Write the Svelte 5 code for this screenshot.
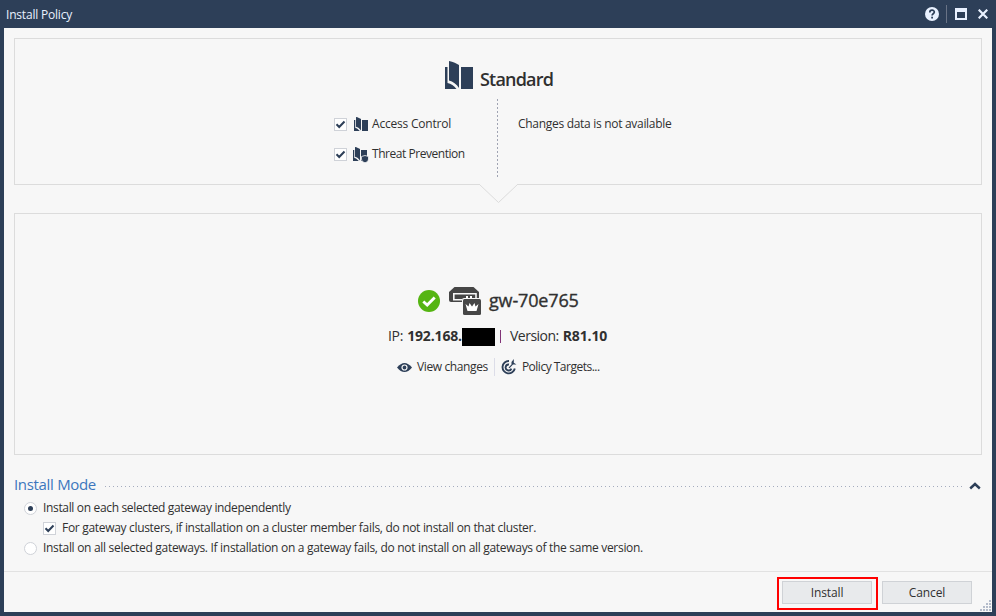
<script>
  let accessControl = $state(true);
  let threatPrevention = $state(true);
  let clusters = $state(true);
  let mode = $state('each');
</script>

{#snippet policyIcon(w, h)}
  <svg width={w} height={h} viewBox="0 0 28 28" fill="#2d3f58">
    <path d="M0 6H2.500V22C6 22.500 9 25 11.500 28H0Z" />
    <path d="M4 0C8 .6 12 3 14 4V27C11.500 23 8 20.500 4 19.500Z" />
    <path d="M16 6H28V28H16Z" />
  </svg>
{/snippet}

{#snippet check(on)}
  <span class="box">
    {#if on}
      <svg width="11" height="11" viewBox="0 0 11 11"><path d="M1.500 5.300L4.200 8L9.500 2.500" fill="none" stroke="#2d3f58" stroke-width="2" /></svg>
    {/if}
  </span>
{/snippet}

<div class="window">
  <header>
    <span class="title">Install Policy</span>
    <svg class="help" width="14" height="14" viewBox="0 0 14 14">
      <circle cx="7" cy="7" r="7" fill="#e9f1ff" />
      <path d="M4.800 5.400C4.800 2.500 9.300 2.500 9.300 5.100C9.300 6.700 7.100 6.800 7.100 8.500" fill="none" stroke="#2d3f58" stroke-width="1.700" />
      <rect x="6.200" y="9.700" width="1.800" height="1.800" fill="#2d3f58" />
    </svg>
    <i class="divider"></i>
    <i class="maximize"></i>
    <svg class="close" width="10" height="10" viewBox="0 0 10 10"><path d="M.7.7L9.300 9.300M9.300.7L.7 9.300" stroke="#e9f1ff" stroke-width="2.200" /></svg>
  </header>

  <main>
    <section class="policy">
      <div class="heading">
        {@render policyIcon(28, 28)}
        <h1>Standard</h1>
      </div>
      <div class="columns">
        <div class="left">
          <button class="opt" onclick={() => (accessControl = !accessControl)}>
            {@render check(accessControl)}
            <span class="ic">{@render policyIcon(14, 14)}</span>
            <span class="t-access">Access Control</span>
          </button>
          <button class="opt" onclick={() => (threatPrevention = !threatPrevention)}>
            {@render check(threatPrevention)}
            <span class="ic threat">
              {@render policyIcon(14, 14)}
              <svg class="shield" width="8" height="8" viewBox="0 0 8 8"><path d="M.5 1.500L4 .5L7.500 1.500V4C7.500 6 5.800 7.200 4 7.800C2.200 7.200.5 6 .5 4Z" fill="#2d3f58" stroke="#f7f7f7" stroke-width=".8" /></svg>
            </span>
            <span class="t-threat">Threat Prevention</span>
          </button>
        </div>
        <i class="vdots"></i>
        <div class="right"><span class="t-changes">Changes data is not available</span></div>
      </div>
      <svg class="notch" width="39" height="20" viewBox="0 0 39 20"><path d="M1 -1H38V1L19.500 18.500L1 1Z" fill="#f7f7f7" /><path d="M.5.5L19.500 18.500L38.500.5" fill="none" stroke="#dcdcdc" /></svg>
    </section>

    <section class="gateway">
      <div class="gw">
        <svg width="22" height="22" viewBox="0 0 22 22"><circle cx="11" cy="11" r="11" fill="#55b512" /><path d="M5.300 11.500L9.200 15L16.700 7.500" fill="none" stroke="#fff" stroke-width="2.900" /></svg>
        <svg class="device" width="32" height="28" viewBox="0 0 32 28">
          <path d="M5.500 0H24.500L30 5V15H2Q0 15 0 13V5Z" fill="#464646" />
          <path d="M13 12.800H4.800V6.800H27V11" fill="none" stroke="#f7f7f7" stroke-width="1.600" />
          <path d="M17 9H19V11H17ZM21 9H23V11H21Z" fill="#fff" />
          <path d="M7.500 9.200H14V10.600H7.500Z" fill="#464646" />
          <rect x="13" y="11" width="19" height="17" rx="2" fill="#f7f7f7" />
          <rect x="14" y="12" width="18" height="16" rx="1.500" fill="#464646" />
          <path d="M16.500 17L19.500 19.500L20.500 16L23 19.500L25.500 16L26.500 19.500L29.500 17L27.500 24H18.500Z" fill="#fff" />
        </svg>
        <h2>gw-70e765</h2>
      </div>
      <div class="info">
        <span class="t-ip">IP:</span><b class="t-addr">192.168.</b><i class="redact"></i><i class="bar"></i>
        <span class="t-ver">Version:</span><b class="t-r">R81.10</b>
      </div>
      <div class="links">
        <svg width="15" height="9" viewBox="0 0 15 9"><path d="M0 4.500Q7.500-4.500 15 4.500Q7.500 13.500 0 4.500Z" fill="#2d3f58" /><circle cx="7.500" cy="4.500" r="2.500" fill="none" stroke="#f7f7f7" stroke-width="1.200" /></svg>
        <span class="t-view">View changes</span>
        <i class="linkbar"></i>
        <svg class="target" width="16" height="16" viewBox="0 0 16 16"><path d="M8 2A6.200 6.200 0 1 0 13.800 9.500M8 5.500A3 3 0 1 0 10.400 9.600" fill="none" stroke="#2d3f58" stroke-width="1.900" /><path d="M7.500 8.500L10.500 5.500V3L12.800 0V3.700L15.500 5.500H12L8.500 9.300Z" fill="#2d3f58" /></svg>
        <span class="t-targets">Policy Targets...</span>
      </div>
    </section>

    <div class="mode-head">
      <h3>Install Mode</h3>
      <i class="hdots"></i>
      <svg width="12" height="8" viewBox="0 0 12 8"><path d="M1.200 6.500L6 2L10.800 6.500" fill="none" stroke="#2d3f58" stroke-width="2.400" /></svg>
    </div>
    <div class="modes">
      <button class="row" onclick={() => (mode = 'each')}>
        <span class="radio" class:on={mode === 'each'}></span><span class="t-each">Install on each selected gateway independently</span>
      </button>
      <button class="row sub" onclick={() => (clusters = !clusters)}>
        {@render check(clusters)}<span class="t-cluster">For gateway clusters, if installation on a cluster member fails, do not install on that cluster.</span>
      </button>
      <button class="row" onclick={() => (mode = 'all')}>
        <span class="radio" class:on={mode === 'all'}></span><span class="t-all">Install on all selected gateways. If installation on a gateway fails, do not install on all gateways of the same version.</span>
      </button>
    </div>
  </main>

  <footer>
    <div class="highlight"><button class="btn">Install</button></div>
    <button class="btn cancel">Cancel</button>
    <svg class="grip" width="11" height="11" viewBox="0 0 11 11" fill="#b4bccb"><path d="M9 0h2v2H9zM6 3h2v2H6zM9 3h2v2H9zM3 6h2v2H3zM6 6h2v2H6zM9 6h2v2H9zM0 9h2v2H0zM3 9h2v2H3zM6 9h2v2H6zM9 9h2v2H9z" /></svg>
  </footer>
</div>

<style>
  .window { box-sizing: border-box; width: 996px; height: 616px; border: 4px solid #2d3f58; border-top: 0; background: #f7f7f7; display: flex; flex-direction: column; font: 12px/20px "Open Sans", "Noto Sans", sans-serif; color: #303030; white-space: nowrap; overflow: hidden; }
  svg { display: block; flex: none; }
  span, b, i, h1, h2, h3 { flex: none; }
  h1, h2, h3 { margin: 0; }
  button { font: inherit; color: inherit; background: none; border: 0; padding: 0; margin: 0; text-align: left; letter-spacing: inherit; }
  header { height: 28px; flex: none; background: #2d3f58; color: #e9f1ff; display: flex; align-items: center; margin: 0 -4px; padding: 0 8px 0 6px; }
  .title { margin-right: auto; padding-top: 2px; letter-spacing: -0.2px; }
  .divider { width: 1px; height: 18px; background: #697386; margin: 0 8px 0 7px; }
  .maximize { box-sizing: border-box; width: 12px; height: 12px; border: 2px solid #e9f1ff; border-top-width: 4px; margin-right: 11px; }
  main { flex: 1; padding: 10px 10px 0; display: flex; flex-direction: column; }
  section { box-sizing: border-box; border: 1px solid #dcdcdc; flex: none; }
  .policy { height: 147px; margin-bottom: 28px; position: relative; }
  .heading { display: flex; padding: 22px 0 0 430px; height: 38px; }
  h1 { font-size: 18px; line-height: 28px; font-weight: 600; margin: 4px 0 0 7px; letter-spacing: -0.8px; }
  .columns { display: flex; }
  .left { width: 482px; box-sizing: border-box; padding: 15px 0 0 319px; display: flex; flex-direction: column; gap: 10px; }
  .opt, .row { display: flex; align-items: center; height: 20px; }
  .t-access { letter-spacing: -0.2px; }
  .t-threat { letter-spacing: -0.46px; }
  .t-changes { letter-spacing: -0.3px; }
  .box { box-sizing: border-box; width: 13px; height: 13px; border: 1px solid #cfd2d8; background: #fff; }
  .ic { width: 18px; margin-left: 7px; position: relative; }
  .threat { width: 19px; margin-left: 6px; }
  .shield { position: absolute; left: 8px; top: 8px; }
  .vdots { width: 1px; height: 79px; background: repeating-linear-gradient(#a0a4b3 0 2px, transparent 2px 4px); }
  .right { padding: 15px 0 0 20px; }
  .notch { position: absolute; left: 464px; top: 145px; }
  .gateway { height: 242px; padding-top: 72px; display: flex; flex-direction: column; }
  .gw { display: flex; align-items: center; height: 30px; padding-left: 403px; }
  .device { margin-left: 9px; }
  h2 { font-size: 18px; font-weight: 400; -webkit-text-stroke: 0.35px #303030; line-height: 28px; margin: -2px 0 0 8px; letter-spacing: -0.15px; }
  .info { display: flex; align-items: center; height: 20px; font-size: 14px; margin: 10px 0 0 373px; }
  .t-ip { letter-spacing: -0.3px; }
  .t-addr { margin-left: 4px; letter-spacing: -0.15px; }
  .t-ver { letter-spacing: -0.5px; }
  .redact { width: 33px; height: 18px; background: #000; margin-top: 1px; }
  .bar { width: 1px; height: 13px; background: #813477; margin: 1px 9px 0 5px; }
  .t-r { margin-left: 4px; letter-spacing: -0.15px; }
  .links { display: flex; align-items: center; height: 20px; margin: 11px 0 0 382px; }
  .t-view { margin-left: 5px; letter-spacing: -0.38px; }
  .linkbar { width: 1px; height: 18px; background: #dcdde8; margin: 0 6px; }
  .t-targets { margin-left: 5px; letter-spacing: -0.5px; }
  .mode-head { display: flex; align-items: center; height: 22px; margin-top: 18px; padding-right: 1px; flex: none; }
  h3 { font-size: 15px; font-weight: 400; color: #3c76bd; line-height: 20px; letter-spacing: -0.32px; }
  .hdots { flex: 1; height: 1px; margin: 4px 6px 0 9px; background: repeating-linear-gradient(90deg, #a5acbe 0 1px, transparent 1px 4px); }
  .mode-head svg { margin-top: 3px; }
  .modes { padding: 3px 0 0 10px; }
  .sub { padding-left: 19px; }
  .radio { box-sizing: border-box; width: 13px; height: 13px; border: 1px solid #cfd2d8; border-radius: 50%; background: #fff; display: flex; align-items: center; justify-content: center; }
  .radio.on::before { content: ""; width: 5px; height: 5px; border-radius: 50%; background: #2d3f58; }
  .row span + span { margin-left: 6px; }
  .t-each { letter-spacing: -0.34px; }
  .t-cluster { letter-spacing: -0.31px; }
  .t-all { letter-spacing: -0.3px; }
  footer { height: 40px; flex: none; border-top: 1px solid #e2e2e2; display: flex; align-items: flex-start; position: relative; padding-left: 773px; }
  .highlight { box-sizing: border-box; border: 2px solid #f00; width: 101px; height: 33px; padding: 2px 3px; margin: 5px 4px 0 0; flex: none; }
  .btn { box-sizing: border-box; width: 90px; height: 23px; border: 1px solid #cfd2d6; background: #e8eaec; text-align: center; display: block; line-height: 21px; letter-spacing: -0.1px; }
  .cancel { margin-top: 9px; }
  .grip { position: absolute; right: 1px; bottom: 1px; }
</style>
